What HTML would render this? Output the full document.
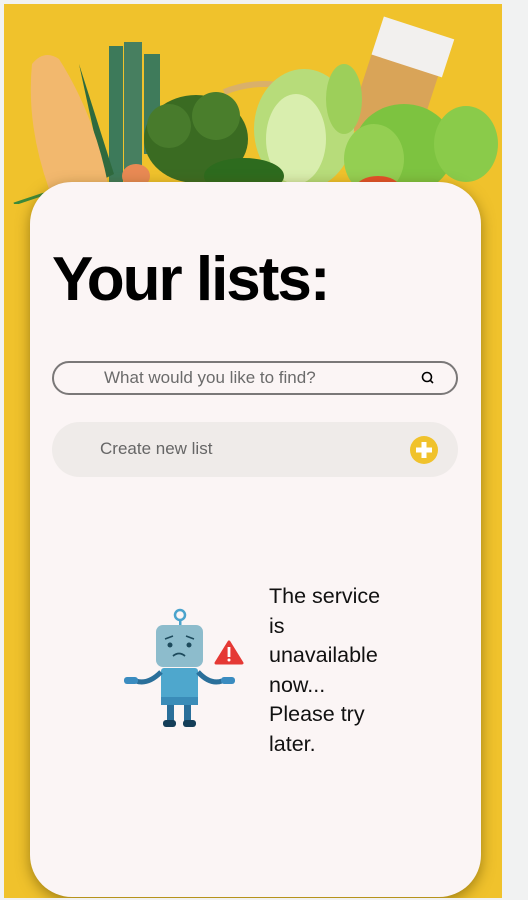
<!DOCTYPE html>
<html><head><meta charset="utf-8"><style>
*{margin:0;padding:0;box-sizing:border-box}
body{width:528px;height:900px;background:#f1f2f2;position:relative;overflow:hidden;font-family:"Liberation Sans",sans-serif}
.frame{position:absolute;left:4px;top:4px;width:498px;height:894px;background:#f0c22c;overflow:hidden}
.card{position:absolute;left:26px;top:178px;width:451px;height:715px;background:#fbf5f5;border-radius:42px;box-shadow:0 4px 14px rgba(90,70,0,.55)}
h1{position:absolute;left:52px;top:240px;font-size:62px;font-weight:bold;letter-spacing:-2px;color:#000;line-height:80px}
.search{position:absolute;left:52px;top:361px;width:406px;height:34px;border:2.5px solid #7a7878;border-radius:17px}
.search span{position:absolute;left:50px;top:5px;font-size:17px;color:#6b6b6b}
.create{position:absolute;left:52px;top:422px;width:406px;height:55px;background:#efebe9;border-radius:28px}
.create span{position:absolute;left:48px;top:17px;font-size:17px;color:#666}
.msg{position:absolute;left:269px;top:582px;font-size:21.5px;line-height:29.5px;color:#111}
</style></head><body>
<div class="frame">
<svg width="498" height="200" style="position:absolute;left:0;top:0">
<path d="M220 88 Q250 76 280 82" stroke="#d9b06a" stroke-width="6" fill="none"/>
<g transform="rotate(18 400 80)"><rect x="360" y="30" width="70" height="110" fill="#d9a458"/><rect x="360" y="22" width="74" height="40" fill="#f2f0ee"/></g>
<rect x="105" y="42" width="14" height="140" fill="#3d7a5a"/><rect x="120" y="38" width="18" height="140" fill="#477f60"/><rect x="140" y="50" width="16" height="100" fill="#3f7b5b"/>
<path d="M75 60 L110 170 L100 175 Z" fill="#2f6a3e"/><path d="M60 130 L95 175" stroke="#3d8a3a" stroke-width="3"/>
<path d="M10 200 L40 190" stroke="#3d8a3a" stroke-width="3"/>
<path d="M28 60 Q40 45 55 55 Q90 110 104 180 L45 185 Q22 120 28 60Z" fill="#f2b86e"/>
<ellipse cx="132" cy="172" rx="14" ry="12" fill="#e98a54"/>
<ellipse cx="192" cy="135" rx="52" ry="44" fill="#3a6b22"/><circle cx="165" cy="122" r="22" fill="#487b2c"/><circle cx="212" cy="112" r="24" fill="#4a7e2c"/>
<ellipse cx="300" cy="125" rx="50" ry="60" fill="#b7dc7a"/><ellipse cx="292" cy="135" rx="30" ry="45" fill="#d9eeae"/>
<ellipse cx="340" cy="95" rx="18" ry="35" fill="#9dcf5a"/>
<ellipse cx="400" cy="145" rx="50" ry="45" fill="#7dc340"/><ellipse cx="462" cy="140" rx="32" ry="38" fill="#8acb4a"/><ellipse cx="370" cy="155" rx="30" ry="35" fill="#94cf52"/>
<ellipse cx="374" cy="184" rx="22" ry="12" fill="#e5502a"/>
<ellipse cx="240" cy="172" rx="40" ry="18" fill="#2d6b1e"/>
</svg>
<div class="card"></div>
</div>
<h1>Your lists:</h1>
<div class="search"><span>What would you like to find?</span>
<svg width="16" height="16" style="position:absolute;left:366px;top:7px" viewBox="0 0 16 16"><circle cx="7" cy="7" r="4.5" fill="none" stroke="#000" stroke-width="1.6"/><path d="M10.2 10.2 L13 13" stroke="#000" stroke-width="1.6"/></svg></div>
<div class="create"><span>Create new list</span>
<svg width="30" height="30" style="position:absolute;left:357px;top:13px" viewBox="0 0 30 30"><circle cx="15" cy="15" r="14" fill="#f0c22c"/><rect x="12.5" y="7" width="5" height="16" fill="#fff"/><rect x="7" y="12.5" width="16" height="5" fill="#fff"/></svg></div>
<svg width="130" height="130" style="position:absolute;left:118px;top:605px" viewBox="0 0 130 130">
<circle cx="62" cy="10" r="5" fill="none" stroke="#4aa3cc" stroke-width="2.5"/><rect x="61" y="14" width="2.5" height="6" fill="#4aa3cc"/>
<rect x="38" y="20" width="47" height="42" rx="7" fill="#8dbccc"/>
<circle cx="52" cy="40" r="2.5" fill="#1d4a5c"/><circle cx="71" cy="40" r="2.5" fill="#1d4a5c"/>
<path d="M55 51 Q61 46 67 51" stroke="#1d4a5c" stroke-width="1.8" fill="none"/>
<path d="M47 34 L55 31 M68 31 L76 34" stroke="#1d4a5c" stroke-width="1.5"/>
<rect x="43" y="63" width="37" height="36" rx="3" fill="#4ea7cd"/><rect x="43" y="92" width="37" height="8" fill="#3a8cb8"/>
<path d="M43 67 Q30 80 18 76" stroke="#2a6f9a" stroke-width="5" fill="none"/><path d="M80 67 Q92 80 104 76" stroke="#2a6f9a" stroke-width="5" fill="none"/>
<rect x="6" y="72" width="14" height="7" rx="3" fill="#3a8cc0"/><rect x="103" y="72" width="14" height="7" rx="3" fill="#3a8cc0"/>
<rect x="49" y="100" width="7" height="18" fill="#2a6f9a"/><rect x="66" y="100" width="7" height="18" fill="#2a6f9a"/>
<rect x="45" y="115" width="13" height="7" rx="3" fill="#143e58"/><rect x="65" y="115" width="13" height="7" rx="3" fill="#143e58"/>
<path d="M111 37 L124 58 L98 58 Z" fill="#e53935" stroke="#e53935" stroke-width="3" stroke-linejoin="round"/>
<rect x="109.6" y="42" width="2.8" height="10" fill="#fff"/><circle cx="111" cy="55" r="1.5" fill="#fff"/>
</svg>
<div class="msg">The service<br>is<br>unavailable<br>now...<br>Please try<br>later.</div>
</body></html>
